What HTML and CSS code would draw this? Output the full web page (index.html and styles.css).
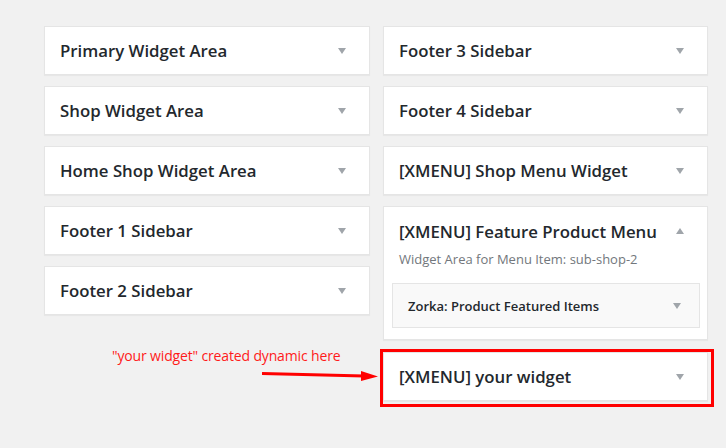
FILE: index.html
```html
<!DOCTYPE html>
<html>
<head>
<meta charset="utf-8">
<link rel="stylesheet" href="styles.css">
</head>
<body>
<div class="page">
  <div class="col">
    <div class="card"><div class="head"><span class="title">Primary Widget Area</span><span class="arrow"></span></div></div>
    <div class="card"><div class="head"><span class="title">Shop Widget Area</span><span class="arrow"></span></div></div>
    <div class="card"><div class="head"><span class="title">Home Shop Widget Area</span><span class="arrow"></span></div></div>
    <div class="card"><div class="head"><span class="title">Footer 1 Sidebar</span><span class="arrow"></span></div></div>
    <div class="card"><div class="head"><span class="title">Footer 2 Sidebar</span><span class="arrow"></span></div></div>
    <div class="note">
      <span class="note-text">"your widget" created dynamic here</span>
    </div>
  </div>
  <div class="col right">
    <div class="card"><div class="head"><span class="title">Footer 3 Sidebar</span><span class="arrow"></span></div></div>
    <div class="card"><div class="head"><span class="title">Footer 4 Sidebar</span><span class="arrow"></span></div></div>
    <div class="card"><div class="head"><span class="title">[XMENU] Shop Menu Widget</span><span class="arrow"></span></div></div>
    <div class="card open">
      <div class="head"><span class="title">[XMENU] Feature Product Menu</span><span class="arrow up"></span></div>
      <div class="desc">Widget Area for Menu Item: sub-shop-2</div>
      <div class="inner"><span class="inner-title">Zorka: Product Featured Items</span><span class="arrow"></span></div>
    </div>
    <div class="card highlight">
      <div class="head"><span class="title">[XMENU] your widget</span><span class="arrow"></span></div>
      <div class="redbox"></div>
      <svg class="pointer" width="124" height="14" viewBox="0 0 124 14">
        <path d="M0 5.5 L102 8" stroke="#ff0000" stroke-width="3" fill="none"/>
        <path d="M99 3 L116 8.5 L99 13 Z" fill="#ff0000"/>
      </svg>
    </div>
  </div>
</div>
</body>
</html>
```

FILE: styles.css
```css
html, body {
  margin: 0;
  padding: 0;
  background: #f1f1f1;
  min-height: 100%;
}
body {
  font-family: "Open Sans", "Liberation Sans", sans-serif;
  color: #23282d;
}
.page {
  display: flex;
  align-items: flex-start;
  gap: 13px;
  padding: 26px 0 40px 44px;
}
.col {
  width: 326px;
  display: flex;
  flex-direction: column;
  gap: 11px;
}
.col.right {
  width: 325px;
}
.card {
  position: relative;
  background: #fff;
  border: 1px solid #e5e5e5;
  box-shadow: 0 1px 1px rgba(0, 0, 0, 0.04);
}
.head {
  height: 47px;
  display: flex;
  align-items: center;
  justify-content: space-between;
  padding: 0 23px 0 15px;
}
.title {
  font-size: 16.8px;
  font-weight: 600;
}
.arrow {
  width: 0;
  height: 0;
  border-left: 4px solid transparent;
  border-right: 4px solid transparent;
  border-top: 6px solid #a0a5aa;
}
.arrow.up {
  border-top: 0;
  border-bottom: 6px solid #a0a5aa;
}
.open {
  padding-bottom: 11px;
}
.open .head {
  height: 48px;
}
.desc {
  margin-top: -5px;
  padding: 0 15px;
  font-size: 13px;
  line-height: 18px;
  color: #72777c;
}
.inner {
  margin: 15px 7px 0 8px;
  height: 43px;
  background: #f9f9f9;
  border: 1px solid #e5e5e5;
  display: flex;
  align-items: center;
  justify-content: space-between;
  padding: 0 18px 0 15px;
}
.inner-title {
  font-size: 13px;
  font-weight: 600;
}
.highlight {
  margin-top: 1px;
}
.redbox {
  position: absolute;
  left: -4px;
  top: -4px;
  width: 328px;
  height: 52px;
  border: 3px solid #ff0000;
}
.pointer {
  position: absolute;
  left: -122px;
  top: 15px;
}
.note {
  margin-top: 18px;
  padding-left: 68px;
}
.note-text {
  font-size: 14px;
  color: #ff1a1a;
  letter-spacing: -0.15px;
}
```
